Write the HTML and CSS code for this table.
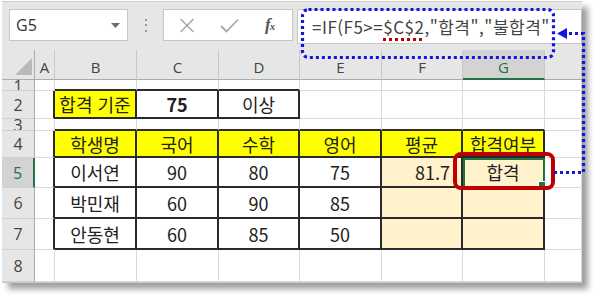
FILE: index.html
```html
<!DOCTYPE html>
<html lang="ko">
<head>
<meta charset="utf-8">
<title>합격 여부</title>
<link rel="stylesheet" href="styles.css">
</head>
<body>
<div class="window">
  <div class="fbar">
    <div class="namebox">
      <span class="ref-name">G5</span>
      <svg class="caret" width="9" height="5" viewBox="0 0 9 5"><polygon points="0,0 9,0 4.5,5" fill="#6e6e6e"/></svg>
    </div>
    <div class="grip"><i></i><i></i><i></i></div>
    <div class="fxbox">
      <svg class="ico" width="16" height="15" viewBox="0 0 16 15"><path d="M1.5 1 L14.5 14 M14.5 1 L1.5 14" stroke="#a8a8a8" stroke-width="1.6" fill="none"/></svg>
      <svg class="ico" width="19" height="15" viewBox="0 0 19 15"><path d="M1 8 L6.5 13.5 L18 1.5" stroke="#a8a8a8" stroke-width="1.8" fill="none"/></svg>
      <span class="fx">f<sub>x</sub></span>
    </div>
    <div class="finput">=IF(F5&gt;=<span class="absref">$C$2</span>,"합격","불합격"</div>
  </div>
  <div class="sheet">
    <div class="corner"><svg width="33" height="30" viewBox="0 0 33 30"><polygon points="13,25 30,25 30,8" fill="#b9b9b9"/></svg></div>
    <div class="ch">A</div><div class="ch">B</div><div class="ch">C</div><div class="ch">D</div><div class="ch">E</div><div class="ch">F</div><div class="ch sel">G</div><div class="ch"></div>

    <div class="rh short r1">1</div><div class="c"></div><div class="c kb"></div><div class="c kb"></div><div class="c kb"></div><div class="c"></div><div class="c"></div><div class="c"></div><div class="c"></div>

    <div class="rh">2</div><div class="c kr"></div><div class="c y k">합격 기준</div><div class="c k b">75</div><div class="c k">이상</div><div class="c"></div><div class="c"></div><div class="c"></div><div class="c"></div>

    <div class="rh short r3">3</div><div class="c"></div><div class="c kb"></div><div class="c kb"></div><div class="c kb"></div><div class="c kb"></div><div class="c kb"></div><div class="c kb"></div><div class="c"></div>

    <div class="rh">4</div><div class="c kr"></div><div class="c y k">학생명</div><div class="c y k">국어</div><div class="c y k">수학</div><div class="c y k">영어</div><div class="c y k">평균</div><div class="c y k">합격여부</div><div class="c"></div>

    <div class="rh sel">5</div><div class="c kr"></div><div class="c k">이서연</div><div class="c k">90</div><div class="c k">80</div><div class="c k">75</div><div class="c o k r">81.7</div><div class="c o k active">합격</div><div class="c"></div>

    <div class="rh">6</div><div class="c kr"></div><div class="c k">박민재</div><div class="c k">60</div><div class="c k">90</div><div class="c k">85</div><div class="c o k"></div><div class="c o k"></div><div class="c"></div>

    <div class="rh">7</div><div class="c kr"></div><div class="c k">안동현</div><div class="c k">60</div><div class="c k">85</div><div class="c k">50</div><div class="c o k"></div><div class="c o k"></div><div class="c"></div>

    <div class="rh">8</div><div class="c"></div><div class="c"></div><div class="c"></div><div class="c"></div><div class="c"></div><div class="c"></div><div class="c"></div><div class="c"></div>
  </div>
</div>
<div class="redbox"></div>
<svg class="callout" width="600" height="300" viewBox="0 0 600 300">
  <rect x="302.5" y="9.5" width="251" height="48" rx="6" ry="6" fill="none" stroke="#1414e0" stroke-width="3.2" stroke-dasharray="3 3"/>
  <polyline points="554,172.5 583.5,172.5 583.5,33.5 567,33.5" fill="none" stroke="#1414e0" stroke-width="3.2" stroke-dasharray="3 3"/>
  <polygon points="557,33.5 567,28 567,39" fill="#1414e0"/>
</svg>
</body>
</html>
```
FILE: styles.css
```css
* { box-sizing: border-box; }
html, body {
  margin: 0;
  padding: 0;
  width: 600px;
  height: 300px;
  overflow: hidden;
  background: #ffffff;
}
body {
  position: relative;
  font-family: "Noto Sans CJK KR", "Noto Sans", sans-serif;
}
.window {
  margin: 1px 0 0 2px;
  width: 580px;
  background: #e6e6e6;
  border-top: 1px solid #cfcfcf;
  border-bottom: 1px solid #c9c9c9;
  box-shadow: 6px 6px 6px rgba(0, 0, 0, 0.38);
}
.fbar {
  height: 48px;
  display: flex;
  align-items: flex-start;
  padding: 7px 0 0 7px;
}
.namebox {
  width: 119px;
  height: 32px;
  background: #fff;
  border: 1px solid #c6c6c6;
  display: flex;
  align-items: center;
  justify-content: space-between;
  padding: 0 7px 0 6px;
  font-family: "Open Sans", "Noto Sans", sans-serif;
  font-size: 16px;
  color: #333;
}
.caret { display: block; }
.grip {
  width: 35px;
  height: 32px;
  display: flex;
  flex-direction: column;
  align-items: center;
  justify-content: center;
  gap: 3.5px;
}
.grip i {
  display: block;
  width: 2px;
  height: 2px;
  background: #9a9a9a;
}
.fxbox {
  width: 130px;
  height: 32px;
  background: #fff;
  border: 1px solid #c6c6c6;
  display: flex;
  align-items: center;
  padding-left: 15px;
  gap: 25px;
}
.ico { display: block; }
.fx {
  font-family: "Liberation Serif", serif;
  font-style: italic;
  font-weight: bold;
  font-size: 17px;
  color: #555;
  margin-left: 1px;
}
.fx sub {
  font-size: 11px;
  vertical-align: 0;
  margin-left: -1px;
}
.finput {
  flex: 1;
  height: 35px;
  margin-left: 4px;
  background: #fff;
  border: 1px solid #c6c6c6;
  border-right-color: #bdbdbd;
  display: flex;
  align-items: center;
  padding-left: 14px;
  font-size: 17px;
  letter-spacing: 0.5px;
  color: #444;
  white-space: nowrap;
  overflow: hidden;
}
.absref {
  padding-bottom: 2px;
  margin-bottom: -2px;
  background: repeating-linear-gradient(90deg, #c00000 0 3px, transparent 3px 6px) left bottom / 100% 3px no-repeat;
}
.sheet {
  display: grid;
  grid-template-columns: 33px 20px 82px 82px 81px 82px 81px 82px 37px;
  grid-template-rows: 30px 11px 28px 12px 27px 30px 31px 31px 32px;
  background: #fff;
}
.corner {
  background: #e6e6e6;
  border-right: 1px solid #ababab;
  border-bottom: 1px solid #ababab;
}
.corner svg { display: block; }
.ch {
  background: #e6e6e6;
  border-right: 1px solid #c9c9c9;
  border-bottom: 1px solid #ababab;
  display: flex;
  align-items: center;
  justify-content: center;
  padding-top: 6px;
  font-family: "Open Sans", "Noto Sans", sans-serif;
  font-size: 15px;
  line-height: 1;
  color: #444;
}
.ch.sel {
  background: #d3d3d3;
  color: #217346;
  border-bottom: 2px solid #217346;
}
.rh {
  background: #e6e6e6;
  border-right: 1px solid #ababab;
  border-bottom: 1px solid #cfcfcf;
  display: flex;
  align-items: center;
  justify-content: center;
  font-family: "Open Sans", "Noto Sans", sans-serif;
  font-size: 16px;
  line-height: 1;
  color: #444;
  overflow: hidden;
}
.rh.short {
  align-items: flex-start;
  padding-top: 1px;
}
.rh.r1 { line-height: 10px; }
.rh.r3 { line-height: 11px; }
.rh.sel {
  background: #d3d3d3;
  color: #217346;
  border-right: 2px solid #217346;
}
.c {
  border-right: 1px solid #dadada;
  border-bottom: 1px solid #dadada;
  display: flex;
  align-items: center;
  justify-content: center;
  font-size: 18px;
  line-height: 1;
  color: #222;
  white-space: nowrap;
  overflow: hidden;
}
.y { background: #ffff00; }
.o { background: #fff2cc; }
.k {
  border-right: 2px solid #2a2a2a;
  border-bottom: 2px solid #2a2a2a;
}
.kr { border-right: 2px solid #2a2a2a; }
.kb { border-bottom: 2px solid #2a2a2a; }
.b { font-weight: bold; }
.r {
  justify-content: flex-end;
  padding-right: 11px;
}
.active {
  position: relative;
  overflow: visible;
  z-index: 2;
  outline: 2px solid #217346;
  outline-offset: -2px;
}
.active::after {
  content: "";
  position: absolute;
  right: -3px;
  bottom: -3px;
  width: 6px;
  height: 6px;
  background: #217346;
  border: 1px solid #fff;
}
.redbox {
  position: absolute;
  left: 453px;
  top: 152px;
  width: 102px;
  height: 38px;
  border: 4px solid #c00000;
  border-radius: 8px;
  z-index: 3;
}
.callout {
  position: absolute;
  left: 0;
  top: 0;
  z-index: 4;
  pointer-events: none;
}
```
